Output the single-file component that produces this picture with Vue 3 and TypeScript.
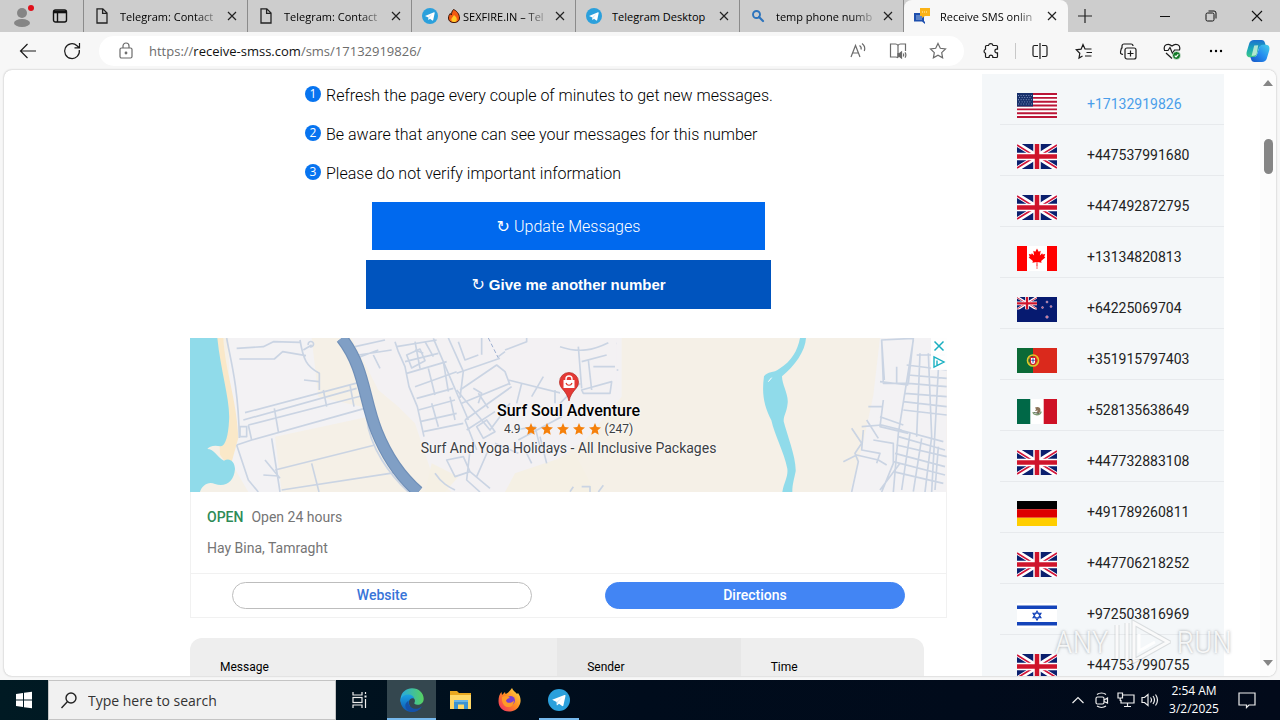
<script setup lang="ts">
interface Tab {
  id: number
  icon: string
  title: string
  fire?: boolean
  active?: boolean
}

const tabs: Tab[] = [
  { id: 1, icon: 'doc', title: 'Telegram: Contact' },
  { id: 2, icon: 'doc', title: 'Telegram: Contact' },
  { id: 3, icon: 'telegram', title: 'SEXFIRE.IN – Tel', fire: true },
  { id: 4, icon: 'telegram', title: 'Telegram Desktop' },
  { id: 5, icon: 'lens', title: 'temp phone numb' },
  { id: 6, icon: 'chat', title: 'Receive SMS onlin', active: true },
]

const tips: string[] = [
  'Refresh the page every couple of minutes to get new messages.',
  'Be aware that anyone can see your messages for this number',
  'Please do not verify important information',
]

const numbers: { flag: string; phone: string; current?: boolean }[] = [
  { flag: 'us', phone: '+17132919826', current: true },
  { flag: 'gb', phone: '+447537991680' },
  { flag: 'gb', phone: '+447492872795' },
  { flag: 'ca', phone: '+13134820813' },
  { flag: 'nz', phone: '+64225069704' },
  { flag: 'pt', phone: '+351915797403' },
  { flag: 'mx', phone: '+528135638649' },
  { flag: 'gb', phone: '+447732883108' },
  { flag: 'de', phone: '+491789260811' },
  { flag: 'gb', phone: '+447706218252' },
  { flag: 'il', phone: '+972503816969' },
  { flag: 'gb', phone: '+447537990755' },
]
</script>

<template>
  <svg class="defs" aria-hidden="true">
    <symbol id="tab-doc" viewBox="0 0 16 16">
      <path d="M3 .8h5.800l4.200 4.200V15H3zM8.600 1v4.300h4.200" fill="none" stroke="#222" stroke-width="1.300" />
    </symbol>
    <symbol id="tab-telegram" viewBox="0 0 16 16">
      <circle cx="8" cy="8" r="8" fill="#2ba0dc" />
      <path d="M3 7.900l9-3.600c.5-.1.8.1.7.7l-1.500 7c-.1.5-.5.6-.9.4L8 10.700l-1.200 1.100c-.2.2-.5.1-.5-.2V9.500z" fill="#fff" />
      <path d="M6.300 9.600l4.200-3.800-3.600 4.100-.2 1.700z" fill="#b7d9ee" />
    </symbol>
    <symbol id="tab-lens" viewBox="0 0 16 16">
      <circle cx="6.500" cy="6.500" r="3.500" fill="none" stroke="#2d74bd" stroke-width="1.900" />
      <path d="M9 9l4 4" stroke="#2d74bd" stroke-width="2.200" stroke-linecap="round" />
    </symbol>
    <symbol id="tab-chat" viewBox="0 0 16 16">
      <path d="M0 5h10v8.500h1V16l-3-2.500H0z" fill="#1d4fae" />
      <path d="M2 7h6v5H2z" fill="#5b83c8" />
      <path d="M6 0h10v8H11l-3 2V8H6z" fill="#fbb317" />
      <path d="M8 4h6" stroke="#fff0b8" stroke-dasharray="1 1" />
    </symbol>

    <symbol id="union" viewBox="0 0 40 25">
      <path d="M0 0h40v25H0z" fill="#0a1f6e" />
      <path d="M0 0l40 25M40 0L0 25" stroke="#fff" stroke-width="5" />
      <path d="M0 1l17 10.600M40 24L23 13.500M0 24l17-10.500M40 1L23 11.600" stroke="#d0163a" stroke-width="1.700" />
      <path d="M20 0v25M0 12.500h40" stroke="#fff" stroke-width="7.500" />
      <path d="M20 0v25M0 12.500h40" stroke="#cf142b" stroke-width="4.500" />
    </symbol>
    <symbol id="flag-gb" viewBox="0 0 40 25"><use href="#union" width="40" height="25" /></symbol>
    <symbol id="flag-us" viewBox="0 0 40 25">
      <path d="M0 0h40v25H0z" fill="#fff" />
      <path
        d="M0 1h40M0 4.850h40M0 8.700h40M0 12.500h40M0 16.350h40M0 20.200h40M0 24h40"
        stroke="#bb1537"
        stroke-width="1.950"
      />
      <path d="M0 0h16v13.400H0z" fill="#17306b" />
      <path
        d="M1 2.500h14M2 4.500h13M1 6.700h14M2 8.900h13M1 11h14"
        stroke="#7f93bd"
        stroke-width="1"
        stroke-dasharray="1 1.600"
      />
    </symbol>
    <symbol id="flag-ca" viewBox="0 0 40 25">
      <path d="M0 0h40v25H0z" fill="#fff" />
      <path d="M0 0h10v25H0zM30 0h10v25H30z" fill="#f00" />
      <path
        d="M20 2.500l1.700 3.300 2-1-.8 4.700 2.300-2.300.5 1.300 2.500-.4-.9 2.700 1 .6-4.200 3.700.5 1.600-4.200-.6.1 4h-1l.1-4-4.200.6.5-1.600-4.200-3.700 1-.6-.9-2.700 2.500.4.5-1.300 2.300 2.300-.8-4.700 2 1z"
        fill="#f00"
      />
      <path d="M20 20v3" stroke="#f66" />
    </symbol>
    <symbol id="flag-nz" viewBox="0 0 40 25">
      <path d="M0 0h40v25H0z" fill="#061a70" />
      <use href="#union" width="20" height="12.500" />
      <g fill="#d0557c" stroke="#c9d0ea" stroke-width=".5">
        <circle cx="30" cy="5" r="1" />
        <circle cx="25.500" cy="10.500" r="1" />
        <circle cx="34" cy="9.500" r="1" />
        <circle cx="30" cy="20" r="1.300" />
      </g>
    </symbol>
    <symbol id="flag-pt" viewBox="0 0 40 25">
      <path d="M0 0h40v25H0z" fill="#da291c" />
      <path d="M0 0h16v25H0z" fill="#0b6a37" />
      <circle cx="16" cy="12.500" r="5.500" fill="none" stroke="#e3c928" stroke-width="1.600" />
      <path d="M11 9l10 7M11 16l10-7" stroke="#e3c928" stroke-width=".7" />
      <path d="M12.800 8.800h6.400v5a3.200 3.200 0 0 1-6.400 0z" fill="#d5222a" />
      <path d="M14 10h4v4a2 2 0 0 1-4 0z" fill="#fff" />
      <path d="M16 10.300v4.500M14.300 12.300h3.400" stroke="#36509b" />
    </symbol>
    <symbol id="flag-mx" viewBox="0 0 40 25">
      <path d="M0 0h40v25H0z" fill="#fff" />
      <path d="M0 0h13.300v25H0z" fill="#006847" />
      <path d="M26.700 0H40v25H26.700z" fill="#ce1126" />
      <path d="M16 13c.5 3.500 7 4 8.200-.5" fill="none" stroke="#7d9a72" stroke-width="1.300" />
      <path d="M18 8.500c3-1.500 5.500 0 5.500 2.500 0 3-2 4-4.500 3l2-2.500-3 .5 1-1.800z" fill="#8b7258" />
      <path d="M17 13.500l5 1" stroke="#5d6b59" />
    </symbol>
    <symbol id="flag-de" viewBox="0 0 40 25">
      <path d="M0 0h40v8.300H0z" />
      <path d="M0 8.300h40v8.400H0z" fill="#d00" />
      <path d="M0 16.700h40V25H0z" fill="#ffce00" />
    </symbol>
    <symbol id="flag-il" viewBox="0 0 40 25">
      <path d="M0 0h40v25H0z" fill="#fff" />
      <path d="M0 4.200h40M0 20.800h40" stroke="#1444ba" stroke-width="3.400" />
      <path d="M20 8l4 6.800h-8zM20 17.200l4-6.900h-8z" fill="none" stroke="#1444ba" stroke-width="1.100" />
    </symbol>
  </svg>

  <div class="desktop">
    <header class="tabstrip">
      <button class="profile" aria-label="Profile">
        <svg width="26" height="26" viewBox="0 0 26 26">
          <circle cx="13" cy="10" r="5" fill="#858585" />
          <ellipse cx="13" cy="20" rx="8" ry="4" fill="#858585" />
          <circle cx="22" cy="5" r="3" fill="#e0101b" />
        </svg>
      </button>
      <button class="workspaces" aria-label="Workspaces">
        <svg width="16" height="16" viewBox="0 0 16 16" fill="none" stroke="#111" stroke-width="1.400">
          <rect x="1.500" y="2" width="13" height="12" rx="2" />
          <path d="M5.500 4v10" />
          <path d="M2 4h12" stroke-width="2.600" />
        </svg>
      </button>
      <div v-for="tab in tabs" :key="tab.id" class="tab" :class="{ active: tab.active }">
        <svg class="tab-icon" width="16" height="16"><use :href="'#tab-' + tab.icon" /></svg>
        <span class="tab-title" :class="{ faded: tab.title !== 'Telegram Desktop' }">
          <svg v-if="tab.fire" class="fire" width="12" height="14" viewBox="0 0 12 14">
            <path
              d="M5.500.5C8.500 1.500 11.500 5 11.500 9c0 3-2 4.500-5.500 4.500S.5 12 .5 9c0-2 .8-3.500 1.800-4.500l1 1.500C3.500 4 4 2 5.500.5z"
              fill="#f25a13"
              stroke="#3a1306"
            />
            <path d="M6 6c2 1.500 3 3 2.800 5-.3 1.400-1.300 2-2.800 2s-2.700-.8-2.700-2.500C3.300 9 5 8 6 6z" fill="#ffc928" />
          </svg>
          {{ tab.title }}
        </span>
        <button class="tab-close" aria-label="Close tab">
          <svg width="10" height="10" viewBox="0 0 10 10"><path d="M1 1l8 8M9 1L1 9" stroke="#222" stroke-width="1.200" /></svg>
        </button>
      </div>
      <button class="new-tab" aria-label="New tab">
        <svg width="14" height="14" viewBox="0 0 14 14"><path d="M7 0v14M0 7h14" stroke="#222" stroke-width="1.200" /></svg>
      </button>
      <div class="window-controls">
        <button aria-label="Minimize">
          <svg width="12" height="12" viewBox="0 0 12 12"><path d="M1 6.500h10" stroke="#111" /></svg>
        </button>
        <button aria-label="Restore">
          <svg width="12" height="12" viewBox="0 0 12 12" fill="none" stroke="#111">
            <rect x="1" y="3" width="8" height="8" rx="1.500" />
            <path d="M3.500 1h5.500a2 2 0 0 1 2 2v5.500" />
          </svg>
        </button>
        <button aria-label="Close">
          <svg width="12" height="12" viewBox="0 0 12 12"><path d="M1 1l10 10M11 1L1 11" stroke="#111" stroke-width="1.100" /></svg>
        </button>
      </div>
    </header>

    <nav class="toolbar">
      <button class="tool" aria-label="Back">
        <svg width="20" height="20" viewBox="0 0 20 20" class="line"><path d="M18 10H2.500M9.500 3L2.500 10l7 7" /></svg>
      </button>
      <button class="tool" aria-label="Refresh">
        <svg width="20" height="20" viewBox="0 0 20 20" class="line">
          <path d="M17.300 9A7.400 7.400 0 1 1 15 4.700L17 6.500M17.500 2v4.800h-5" />
        </svg>
      </button>
      <div class="address">
        <svg class="lock line" width="16" height="18" viewBox="0 0 16 18">
          <rect x="2" y="6" width="12" height="10" rx="1.500" />
          <path d="M5 6V4a3 3 0 0 1 6 0v2" />
          <circle cx="8" cy="11" r=".8" />
        </svg>
        <a class="url" href="https://receive-smss.com/sms/17132919826/">https://<b>receive-smss.com</b>/sms/17132919826/</a>
        <button aria-label="Read aloud">
          <svg width="18" height="18" viewBox="0 0 18 18" class="line gray">
            <path d="M2 15L6.500 3.500 11 15M3.500 11h6M10.500 3.500c1.500 1 2 2.500 1.500 4M13 1.500c2.500 1.800 3.300 4.500 2.300 7.500" />
          </svg>
        </button>
        <button aria-label="Immersive reader">
          <svg width="18" height="18" viewBox="0 0 18 18" class="line gray">
            <path d="M9 3.500v12M9 3.500C8.500 2.500 7.500 2 6.500 2H1.500v13h5c1 0 2 .3 2.500 1M9 3.500c.5-1 1.500-1.500 2.500-1.500h5v7" />
            <path d="M9 11.500h1.500L12.500 10v6l-2-1.500H9z" fill="#666" />
            <path d="M14.200 11.500q1 1.500 0 3M16 10.300q1.800 2.700 0 5.400" />
          </svg>
        </button>
        <button aria-label="Add to favorites">
          <svg width="18" height="18" viewBox="0 0 18 18" class="line gray">
            <path d="M9 1.500l2.300 4.800 5.200.7-3.800 3.600.9 5.200L9 13.300l-4.600 2.500.9-5.200L1.500 7l5.200-.7z" />
          </svg>
        </button>
      </div>
      <button class="tool" aria-label="Extensions">
        <svg width="18" height="18" viewBox="0 0 18 18" class="line">
          <path
            d="M6.500 3.500a2.300 2.300 0 0 1 4.500 0h3.500a1 1 0 0 1 1 1v2.700h-1.200a1.900 1.900 0 0 0 0 3.700h1.200v3.600a1 1 0 0 1-1 1h-3.700v-1a1.900 1.900 0 0 0-3.700 0v1H4.500a1 1 0 0 1-1-1v-3.300a2.100 2.100 0 0 1 0-4V4.500a1 1 0 0 1 1-1z"
          />
        </svg>
      </button>
      <span class="divider"></span>
      <button class="tool" aria-label="Split screen">
        <svg width="18" height="18" viewBox="0 0 18 18" class="line">
          <path d="M9 1v16M7 3.500H3.500a1.500 1.500 0 0 0-1.500 1.500v8a1.500 1.500 0 0 0 1.500 1.500H7M11 3.500h3.500A1.500 1.500 0 0 1 16 5v8a1.500 1.500 0 0 1-1.500 1.500H11" />
        </svg>
      </button>
      <button class="tool" aria-label="Favorites">
        <svg width="18" height="18" viewBox="0 0 18 18" class="line">
          <path d="M7.500 14l-3.500 2 .8-4.700L1.300 7.800l4.800-.6L8 2.500l2 4.500h6.500M11.500 10.500H17M10 14h6.500" />
        </svg>
      </button>
      <button class="tool" aria-label="Collections">
        <svg width="18" height="18" viewBox="0 0 18 18" class="line">
          <rect x="6" y="6" width="11" height="11" rx="2" />
          <path d="M11.500 8.500v6M8.500 11.500h6M4 12.500l-1.200-.3a2 2 0 0 1-1.300-2.400l1-4M3 6.500V4a2 2 0 0 1 2-2h7a2 2 0 0 1 2 2" />
        </svg>
      </button>
      <button class="tool" aria-label="Browser essentials">
        <svg width="18" height="18" viewBox="0 0 18 18" class="line">
          <path d="M1.500 8C0 3 5 .5 9 4c4-3.500 9-1 7.500 4M3 11l6 5.500M1 8.500h4l2-3 2.500 6 2-3.500H17" />
          <circle cx="13.500" cy="13.500" r="4" fill="#137a28" stroke="#f7f7f7" stroke-width=".7" />
          <path d="M11.700 13.600l1.300 1.300 2.300-2.600" stroke="#fff" />
        </svg>
      </button>
      <button class="tool more" aria-label="Settings and more">
        <svg width="16" height="16" viewBox="0 0 16 16"><circle cx="3" cy="8" r="1.200" /><circle cx="8" cy="8" r="1.200" /><circle cx="13" cy="8" r="1.200" /></svg>
      </button>
      <button class="copilot" aria-label="Copilot">
        <svg width="24" height="24" viewBox="0 0 24 24">
          <defs>
            <linearGradient id="cpa" x1="0" y1="0" x2="0" y2="1">
              <stop offset="0" stop-color="#1c6fd0" /><stop offset=".5" stop-color="#19a7b8" /><stop offset="1" stop-color="#3fc985" />
            </linearGradient>
            <linearGradient id="cpb" x1="1" y1="0" x2="0" y2="1">
              <stop offset="0" stop-color="#45d0e8" /><stop offset=".5" stop-color="#258cf0" /><stop offset="1" stop-color="#1453c4" />
            </linearGradient>
          </defs>
          <path d="M8 1h7.500c2 0 3 1.200 3.500 3l.7 2.500h-3.200c-2 0-3 1-3.600 3L11 15c-.6 2-1.600 3.300-3.800 3.300H4C.8 18.300 0 15.500.8 12.500l2.400-8C3.900 2.200 5.500 1 8 1z" fill="url(#cpa)" />
          <path d="M16 23H8.500c-2 0-3-1.200-3.500-3l-.6-2h3c2 0 3.200-1 3.800-3L13 9c.6-2 1.600-3.300 3.800-3.300H20c3.200 0 4 2.800 3.200 5.800l-2.400 8C20.100 21.800 18.500 23 16 23z" fill="url(#cpb)" />
          <path d="M12.200 6.200l-4 .3L5.600 17l3.300-.4c1-.4 1.500-1.200 1.900-2.400z" fill="#c9efd6" opacity=".85" />
        </svg>
      </button>
    </nav>

    <div class="viewport">
      <div class="page">
        <main class="content">
          <ol class="tips">
            <li v-for="(tip, i) in tips" :key="tip"><span class="tip-no">{{ i + 1 }}</span>{{ tip }}</li>
          </ol>
          <div class="actions">
            <button class="update"><span class="spin">↻</span> Update Messages</button>
            <button class="another"><span class="spin">↻</span> Give me another number</button>
          </div>

          <section class="ad">
            <div class="map">
              <svg class="map-art" viewBox="0 0 757 154" preserveAspectRatio="xMidYMid slice">
                <path d="M0 0h757v154H0z" fill="#f5f0e7" />
                <g transform="translate(-5 -8) scale(.33333)">
                  <path d="M130 24H380L400 200 550 235 550 260 270 320 290 486 190 486 140 400z" fill="#f3f2f4" />
                  <path d="M500 24H1310V200L1200 330 1100 400 960 486H800L740 430 690 280 640 230 580 180z" fill="#f3f1f3" />
                  <path d="M740 400l80 40-40 46h-60zM990 430l180-60 60 116H960z" fill="#f5f0e4" />
                  <path d="M90 24h25c5 100 40 180 45 300l-25 90-30-40z" fill="#fae8c8" />
                  <path d="M15 24h82c10 100 40 190 35 250-2 40-10 75-25 75-20-5-35 0-40 8 20 0 30 25 50 35 15-10 32 0 33 25-3 40-30 55-60 45-20-10-40 5-45 24H15z" fill="#90dbea" />
                  <g class="roads">
                    <path d="M125 24c10 60 35 140 38 300M155 55l80-5 30-15 80 2M163 87h105l25-22 70 12M345 30c10 60 20 80 58 100v50M355 60l25-15M357 150l45 5M370 45a8 8 0 1 1 5 5" />
                    <path d="M180 248l340-90M190 285l350-90M175 270l340-95M190 285l10 45 350-98M155 345l45-15M268 235l12 70M415 180l10 50M495 165l12 65M165 290h20v30h-20z" />
                    <path d="M155 345l35 105 30 36M260 325l25 161M270 420l300-75M380 400l22 86M290 480l340-52M240 390l45 55M235 435l45 3" />
                    <path d="M545 265c10 90 70 170 125 221M500 90l80-30M510 50l90-20M520 75l100-15M565 75l20 40M630 35l10 30 20 45 12 60 25 60 20 90" />
                    <path d="M635 50l120-20M660 95l100-25M665 130l120-35M690 170l125-45M695 205l110-30M700 240l110-30M705 275l110-25M715 305l120-25M690 35l15 80M745 25l105 245M790 24l45 100-10 80M665 75l40-18 15 35-40 22z" />
                    <path d="M815 130l130-45M825 180l110-75 25 20 15 40M830 220l145-60M840 270l140-100M840 270l35 90M845 300l85-55M815 180l100 120 60-80M880 190l30 45M960 60l65-25v-11M940 80l20-15M820 35l20 55 40-15M890 24v50M970 150l200 50M1010 160l-15 60M1075 140l-35 60" />
                    <path d="M855 360l-10 90 40 36M785 390l50-10 20 45-45 15zM855 425l60 50M910 360l-35 80M930 340l70 30M990 300l60-10 20 80M1000 330l130-70M1010 340l30 60M1065 320l20 80M1110 180v40M1145 65l150-25M1185 60l10 125M1220 75l15 110M1190 120h110M1180 180l110-10M750 430c20 30 40 40 60 50" />
                    <path d="M875 290l30-20 25 35-35 20zM690 60l25 10M720 35l25 45M730 115l20 80M775 95l15 90M795 200l15 70M740 220l20 70M865 175l25 15-10 30" />
                  </g>
                  <path d="M910 24l30 60" stroke="#9cafd0" stroke-width="3" stroke-dasharray="12 7" />
                  <path d="M470 24c70 90 65 180 105 280 28 70 65 130 125 182" stroke="#6f8fb8" stroke-width="37" fill="none" />
                  <path d="M470 24c70 90 65 180 105 280 28 70 65 130 125 182" stroke="#809fc5" stroke-width="30" fill="none" />
                </g>
                <g transform="translate(370 -8) scale(.33333)">
                  <path d="M960 24h200v462H870l40-150 30-140z" fill="#f3f2f4" />
                  <path d="M0 24h170v170L100 210 0 240z" fill="#f3f1f3" />
                  <path d="M720 24h18c-2 40-35 85-72 115 0 25 20 55 17 80-3 30-12 35-12 55 10 40 38 110 36 150-5 25-10 40-10 62h-30c5-30 18-45 15-70-10-50-38-100-48-145-20-40-30-75-22-132 10-15 30-10 45-22 40-25 55-55 63-93z" fill="#90dbea" />
                  <path d="M625 155l10-12" stroke="#fff" stroke-width="3" />
                  <g class="roads">
                    <path d="M0 50c60 20 100 10 145-12M55 50l10 125M85 90l10 90M65 95l75-20M100 110h65M65 180l90-25-5 35H70zM0 220l60-60M30 485l10-15M65 470h25v16M115 486l15-20" />
                    <path d="M965 30l95-5-15 135h-75zM965 30l8 120M1060 30l-45 280-15 176M1070 75h85M1080 70l-10 250M1105 70l10 250-20 166M1135 120l-20 366M1040 105l120 15M1045 135l115 10M1045 160l115 10M1035 190l125 10M1030 215l130 15M1030 240l130 15M960 155l85 10M1010 110v50" />
                    <path d="M970 210l-10 80 85 20M925 230h40M905 290l60-5 60 15M960 260l70 25M1020 300l130 35M1015 320l140 40M1010 345l150 35M1005 370l150 40M1000 395l155 40M1000 425l150 35M1050 310l-25 170M1085 325l-25 160M1135 350l-10 130" />
                    <path d="M875 295l30 45-20 30 10 25-20 91M850 395l40-20 65 15 25 15M910 300l-5 60 55 10-10 30M940 330l60 10v60l-35 86M960 480l60-80M920 270l35 55" />
                  </g>
                </g>
              </svg>
              <div class="ad-buttons">
                <button aria-label="Close ad">
                  <svg width="14" height="14" viewBox="0 0 14 14"><path d="M2.500 2.500l9 9M11.500 2.500l-9 9" stroke="#19aec0" stroke-width="1.500" /></svg>
                </button>
                <button aria-label="Ad choices">
                  <svg width="14" height="14" viewBox="0 0 14 14" fill="none" stroke="#19b0c2" stroke-width="1.400"><path d="M2 1.800l10 5.200-10 5.200zM5 5.500v4.500" /></svg>
                </button>
              </div>
              <div class="place">
                <svg width="20" height="30" viewBox="0 0 20 30">
                  <path d="M10 .5a9.500 9.500 0 0 1 9.500 9.500c0 7-7 8-9.500 19C7.500 18 .5 17 .5 10A9.500 9.500 0 0 1 10 .5z" fill="#e53935" stroke="#b3261e" stroke-width=".7" />
                  <path d="M4.500 8h11v8h-11z" fill="#fff" />
                  <path d="M7 8V7a3 3 0 0 1 6 0v1" fill="none" stroke="#fff" stroke-width="1.400" />
                  <path d="M7 11c1 3 5 3 6 0" fill="none" stroke="#d93025" stroke-width="1.200" />
                </svg>
                <strong>Surf Soul Adventure</strong>
                <div class="rating">
                  <span>4.9</span>
                  <span class="stars">
                    <svg v-for="n in 5" :key="n" width="12" height="12" viewBox="0 0 12 12">
                      <path d="M6 0l1.700 4.100 4.300.3-3.300 2.900 1 4.400L6 9.400l-3.700 2.300 1-4.400L0 4.400l4.300-.3z" fill="#f5800b" />
                    </svg>
                  </span>
                  <span>(247)</span>
                </div>
                <p>Surf And Yoga Holidays - All Inclusive Packages</p>
              </div>
            </div>
            <div class="ad-info">
              <p><b>OPEN</b>Open 24 hours</p>
              <p>Hay Bina, Tamraght</p>
            </div>
            <div class="ad-actions">
              <a class="outline" href="#website">Website</a>
              <a class="solid" href="#directions">Directions</a>
            </div>
          </section>

          <table class="messages">
            <thead>
              <tr><th>Message</th><th class="sorted">Sender</th><th>Time</th></tr>
            </thead>
          </table>
        </main>

        <aside class="numbers">
          <a v-for="n in numbers" :key="n.phone" :href="'#' + n.phone" :class="{ current: n.current }">
            <svg width="40" height="25"><use :href="'#flag-' + n.flag" /></svg>
            <span>{{ n.phone }}</span>
          </a>
        </aside>
      </div>
      <div class="scrollbar">
        <svg width="10" height="6" viewBox="0 0 10 6"><path d="M0 6l5-6 5 6z" fill="#858585" /></svg>
        <span class="thumb"></span>
        <svg class="down" width="10" height="6" viewBox="0 0 10 6"><path d="M0 0l5 6 5-6z" fill="#858585" /></svg>
      </div>
    </div>

    <div class="watermark">
      <span>ANY</span>
      <svg width="58" height="46" viewBox="0 0 58 46">
        <g fill="none" stroke="#8b8f94" stroke-opacity=".25" stroke-width="5">
          <path d="M4 6v34M14 4v38M21 4l34 19-34 19z" />
        </g>
        <g fill="none" stroke="#fff" stroke-opacity=".85" stroke-width="3">
          <path d="M4 6v34M14 4v38M21 4l34 19-34 19zM26 15v17l16-9" />
        </g>
      </svg>
      <span>RUN</span>
    </div>

    <footer class="taskbar">
      <button class="start" aria-label="Start">
        <svg width="18" height="18" viewBox="0 0 18 18" fill="#fff"><path d="M1 3l7-1v6.500H1zM9 1.800L17 .7v7.800H9zM1 9.500h7V16l-7-1zM9 9.500h8v7.800l-8-1.100z" /></svg>
      </button>
      <label class="search">
        <svg width="18" height="18" viewBox="0 0 18 18" fill="none" stroke="#222" stroke-width="1.400"><circle cx="11" cy="7" r="5" /><path d="M7.300 10.800L1.500 17" /></svg>
        <input type="text" placeholder="Type here to search" aria-label="Type here to search" />
      </label>
      <button class="app task-view" aria-label="Task view">
        <svg width="18" height="18" viewBox="0 0 18 18" fill="none" stroke="#eee" stroke-width="1.200">
          <path d="M2 1v3h9V1M2 17v-3h9v3" /><rect x="2" y="6.500" width="9" height="5" /><path d="M14.500 1v2M14.500 8v9" /><path d="M13.500 5.500h2" stroke-width="2" />
        </svg>
      </button>
      <button class="app focused" aria-label="Edge">
        <svg width="24" height="24" viewBox="0 0 24 24">
          <defs>
            <linearGradient id="ea" x1="0" y1="0" x2="1" y2="0"><stop offset="0" stop-color="#28a9e0" /><stop offset="1" stop-color="#57d260" /></linearGradient>
            <linearGradient id="eb" x1="0" y1="0" x2="0" y2="1"><stop offset="0" stop-color="#1ba2e2" /><stop offset="1" stop-color="#0e55b2" /></linearGradient>
          </defs>
          <path d="M.5 10.500C1.500 4 6.500.3 12 .3c7 0 11.700 5 11.700 10.400 0 4-3 6-6.200 6-2.500 0-3.500-1-3.200-1.600 2-3-.5-6.600-5-6.600-4 0-7 2-8.800 5.500z" fill="url(#ea)" />
          <path d="M.5 11.500C2 7.500 6 6 9 6.500c3 .3 5 2.500 5.200 4-3.400-1-5.700 1.500-5.200 5 .7 4 4 6.500 8.500 6.500C15.500 23.500 13.500 24 12 24 5 24 0 18 .5 11.500z" fill="url(#eb)" />
          <path d="M8.700 12.500C7.500 18 12 21.500 17 20.700c2.500-.4 4-1.700 5-2.700-2 5-8 7-13 5-4.500-2-5.200-7.500-.3-10.500z" fill="#1551a8" />
        </svg>
      </button>
      <button class="app" aria-label="File Explorer">
        <svg width="24" height="24" viewBox="0 0 24 24">
          <path d="M1 3h7l2 2h12v16H1z" fill="#e9a820" /><path d="M1 7h21v14H1z" fill="#ffd867" />
          <path d="M5 12h14v9h-4v-4.500H9V21H5z" fill="#3c93d2" /><path d="M5 12h14v2H5z" fill="#69b5e7" />
        </svg>
      </button>
      <button class="app" aria-label="Firefox">
        <svg width="24" height="24" viewBox="0 0 24 24">
          <defs><linearGradient id="fx" x1="1" y1="0" x2="0" y2="1"><stop offset="0" stop-color="#ffe34a" /><stop offset=".5" stop-color="#ff8a22" /><stop offset="1" stop-color="#f0246c" /></linearGradient></defs>
          <path d="M14 0c1 3 4 4 5 6l1-1c3 4 3.500 9 1 13-2 4-6 5.500-10 5.500C4.500 23.500.5 19 .5 13c0-4 1-7 3-9l.5 3 3-3 .5 2C10 5 12 3 14 0z" fill="url(#fx)" />
          <circle cx="12.500" cy="12.500" r="4.500" fill="#7b3fd0" />
          <path d="M4 9c3-1.500 6-1.500 8 1-2 0-4 1.500-4 3 1.500 3 6 2 8-.5-.5 5-3 7-6.500 6.500C5 18.500 3.500 13 4 9z" fill="#ff9a28" />
        </svg>
      </button>
      <button class="app running" aria-label="Telegram">
        <svg width="22" height="22"><use href="#tab-telegram" /></svg>
      </button>
      <div class="tray">
        <button aria-label="Show hidden icons"><svg width="12" height="12" viewBox="0 0 12 12" class="traylines"><path d="M.5 9L6 3.500 11.500 9" /></svg></button>
        <button aria-label="Meet now"><svg width="14" height="16" viewBox="0 0 14 16" class="traylines"><rect x="1" y="5" width="8" height="7" rx="1.500" /><path d="M9 8l3.500-2v5L9 9.500M2 2.500c2.500-2 6.500-2 9 0M2 14c2.500 1.700 6.500 1.700 9 0" /></svg></button>
        <button aria-label="Network"><svg width="18" height="16" viewBox="0 0 18 16" class="traylines"><path d="M6 3h11v8H4V8M10.500 11v3.500M7 14.500h7M1 1h4.500v5H1zM3.200 6v3" /></svg></button>
        <button aria-label="Volume"><svg width="18" height="16" viewBox="0 0 18 16" class="traylines"><path d="M1 5.500h2.500L7 2.500v11l-3.500-3H1zM9.500 5.500q2 2.500 0 5M12 4q3 4 0 8M14.500 2.500q4 5.500 0 11" /></svg></button>
        <time>2:54 AM<br />3/2/2025</time>
        <button class="notify" aria-label="Notifications"><svg width="18" height="18" viewBox="0 0 18 18" class="traylines"><path d="M1 2h16v12h-6l-2.500 2.500V14H1z" /></svg></button>
      </div>
    </footer>
  </div>
</template>

<style>
body {
  margin: 0;
  overflow: hidden;
}
</style>

<style scoped>
* {
  box-sizing: border-box;
}
button {
  border: 0;
  padding: 0;
  background: none;
  font: inherit;
  color: inherit;
  display: flex;
  align-items: center;
  justify-content: center;
}
p,
ol {
  margin: 0;
  padding: 0;
}
a {
  color: inherit;
  text-decoration: none;
}
svg {
  flex: none;
}
.defs {
  position: absolute;
  width: 0;
  height: 0;
}
.line {
  fill: none;
  stroke: #1b1b1b;
  stroke-width: 1.2;
}
.gray,
.lock {
  stroke: #6b6b6b;
}
.desktop {
  position: relative;
  display: flex;
  flex-direction: column;
  height: 100vh;
  background: #f7f7f7;
  font-family: "Open Sans", "Noto Sans", sans-serif;
}

/* Tab strip */
.tabstrip {
  display: flex;
  flex: none;
  height: 32px;
  background: #cdcdcd;
  font-size: 11px;
}
.profile {
  width: 44px;
}
.workspaces {
  width: 40px;
  padding-right: 8px;
  border-right: 1px solid #8b8b8b;
}
.tab {
  display: flex;
  align-items: center;
  flex: 0 1 164px;
  min-width: 0;
  padding: 0 7px 0 10px;
  border-right: 1px solid #8b8b8b;
}
.tab-title {
  display: flex;
  align-items: center;
  gap: 3px;
  flex: 1;
  min-width: 0;
  margin: 0 4px 0 10px;
  overflow: hidden;
  color: #000;
  white-space: nowrap;
}
.faded {
  mask-image: linear-gradient(90deg, #000 75%, rgba(0, 0, 0, 0.1));
}
.tab-close {
  width: 16px;
  height: 16px;
}
.tab.active {
  background: #f7f7f7;
  border-color: transparent;
  border-radius: 8px 8px 0 0;
}
.new-tab {
  width: 34px;
}
.window-controls {
  display: flex;
  margin-left: auto;
}
.window-controls button {
  width: 46px;
}

/* Toolbar */
.toolbar {
  display: flex;
  align-items: center;
  flex: none;
  height: 38px;
  padding: 0 2px 0 6px;
}
.tool {
  width: 44px;
  height: 32px;
}
.address {
  display: flex;
  align-items: center;
  flex: 1;
  height: 30px;
  margin: 0 5px;
  padding: 0 6px 0 19px;
  border-radius: 15px;
  background: #fff;
  font-size: 13px;
}
.address button {
  width: 40px;
  height: 30px;
}
.url {
  flex: 1;
  margin-left: 15px;
  color: #6c6c6c;
}
.url b {
  font-weight: 400;
  color: #111;
}
.divider {
  width: 1px;
  height: 16px;
  margin: 0 2px;
  background: #c8c8c8;
}
.copilot {
  width: 40px;
  height: 32px;
}

/* Page */
.viewport {
  display: flex;
  flex: 1;
  min-height: 0;
  margin: 0 4px 4px;
  overflow: hidden;
  border-radius: 8px;
  background: #fff;
  box-shadow: 0 0 2px #aaa;
  font-family: Roboto, sans-serif;
}
.page {
  display: grid;
  grid-template-columns: minmax(0, 1fr) 242px;
  gap: 35px;
  flex: 1;
  min-width: 0;
  padding: 4px 36px 0 186px;
}
.tips {
  display: flex;
  flex-direction: column;
  gap: 15px;
  padding: 10px 0 0 115px;
  list-style: none;
  font-size: 16px;
  font-weight: 300;
  line-height: 24px;
  color: #000;
}
.tips li {
  display: flex;
  align-items: center;
  gap: 5px;
}
.tip-no {
  width: 16px;
  height: 16px;
  margin-bottom: 4px;
  border-radius: 50%;
  background: #0774f0;
  color: #fff;
  font: 12px/16px "Open Sans", sans-serif;
  text-align: center;
}
.actions {
  display: flex;
  flex-direction: column;
  align-items: center;
  gap: 10px;
  margin-top: 16px;
  color: #fff;
  font-size: 16px;
}
.actions button {
  gap: 4px;
}
.spin {
  font-family: "DejaVu Sans", sans-serif;
  font-weight: 400;
  font-size: 16px;
}
.update {
  width: 52%;
  height: 48px;
  background: #0069ee;
  font-weight: 300;
}
.another {
  width: 405px;
  height: 49px;
  background: #0054be;
  font-family: "Liberation Sans", sans-serif;
  font-size: 15px;
  font-weight: 700;
}
.ad {
  margin-top: 29px;
  border: 1px solid #f1f1f1;
  border-top: 0;
}
.map {
  position: relative;
  height: 154px;
  margin: 0 -1px;
}
.map-art {
  display: block;
  width: 100%;
  height: 100%;
}
.roads {
  fill: none;
  stroke: #cad4e3;
  stroke-width: 5;
  stroke-linejoin: round;
}
.ad-buttons {
  position: absolute;
  top: 0;
  right: 0;
  background: rgba(255, 255, 255, 0.9);
}
.ad-buttons button {
  width: 16px;
  height: 16px;
}
.place {
  position: absolute;
  inset: 34px 0 0;
  display: flex;
  flex-direction: column;
  align-items: center;
  color: #3c4043;
  font-size: 14px;
  line-height: 20px;
  text-shadow: 0 0 2px #fff, 0 0 3px #fff;
}
.place strong {
  color: #000;
  font-size: 16px;
  font-weight: 500;
  line-height: 18px;
}
.rating {
  display: flex;
  align-items: center;
  gap: 4px;
  font-size: 12px;
  line-height: 18px;
}
.stars {
  display: flex;
  gap: 4px;
}
.ad-info {
  display: flex;
  flex-direction: column;
  gap: 11px;
  padding: 15px 16px;
  color: #757575;
  font-size: 14px;
  line-height: 20px;
}
.ad-info b {
  margin-right: 8px;
  color: #2e8b57;
  font-weight: 500;
}
.ad-actions {
  display: flex;
  justify-content: space-between;
  padding: 8px 41px;
  border-top: 1px solid #f1f1f1;
  font-size: 14px;
  font-weight: 500;
}
.ad-actions a {
  width: 300px;
  border: 1px solid #bdbdbd;
  border-radius: 14px;
  line-height: 25px;
  text-align: center;
}
.outline {
  color: #3874d8;
}
.ad-actions .solid {
  border-color: #4285f4;
  background: #4285f4;
  color: #fff;
}
.messages {
  width: 97%;
  height: 58px;
  margin-top: 20px;
  overflow: hidden;
  border-collapse: collapse;
  border-radius: 12px 12px 0 0;
  background: #eee;
  table-layout: fixed;
  font-size: 12px;
  color: #000;
}
.messages th {
  padding: 0 30px;
  font-weight: 400;
  text-align: left;
}
.messages th:first-child {
  width: 50%;
}
.messages .sorted {
  background: #e7e7e7;
}
.numbers {
  padding-left: 18px;
  background: #f4f7f9;
}
.numbers a {
  display: flex;
  align-items: center;
  gap: 30px;
  height: 51px;
  padding: 12px 17px 0;
  border-bottom: 1px solid #e7eaed;
  color: #222;
  font-size: 14px;
}
.numbers span {
  padding-bottom: 2px;
}
.numbers .current {
  color: #4a9eea;
}
.scrollbar {
  display: flex;
  flex-direction: column;
  align-items: center;
  width: 16px;
  padding: 10px 0;
  background: #fcfcfc;
}
.thumb {
  width: 9px;
  height: 35px;
  margin-top: 53px;
  border-radius: 5px;
  background: #858585;
}
.down {
  margin-top: auto;
}

/* Recorder logo laid over the screen corner */
.watermark {
  position: absolute;
  right: 48px;
  bottom: 55px;
  display: flex;
  align-items: center;
  gap: 5px;
  color: rgba(255, 255, 255, 0.85);
  font: 300 32px/46px "Roboto Condensed", "Open Sans Condensed", Roboto, sans-serif;
  text-shadow: 0 0 3px rgba(100, 105, 110, 0.6);
  pointer-events: none;
}

/* Taskbar */
.taskbar {
  display: flex;
  flex: none;
  height: 40px;
  background: linear-gradient(90deg, #001a23, #000c1c 50%, #020a1a);
  color: #fff;
}
.start {
  width: 48px;
}
.search {
  display: flex;
  align-items: center;
  gap: 10px;
  width: 288px;
  padding: 0 11px;
  border: 1px solid #c4c4c4;
  background: #f1f1f1;
}
.search input {
  flex: 1;
  min-width: 0;
  border: 0;
  padding: 0;
  outline: 0;
  background: none;
  font: 14px "Open Sans", sans-serif;
}
.search input::placeholder {
  color: #333;
  opacity: 1;
}
.app {
  width: 49px;
}
.task-view {
  width: 51px;
  padding-right: 3px;
}
.focused {
  background: #34474f;
}
.focused,
.running {
  box-shadow: inset 0 -2px #76b9ed;
}
.running {
  width: 40px;
  margin: 0 5px;
}
.tray {
  display: flex;
  align-items: center;
  margin-left: auto;
  padding-right: 4px;
}
.tray button {
  width: 24px;
  height: 40px;
}
.traylines {
  fill: none;
  stroke: #eee;
  stroke-width: 1.2;
}
.tray time {
  width: 64px;
  font-size: 12px;
  line-height: 18px;
  text-align: center;
}
.tray .notify {
  width: 42px;
  margin-right: 8px;
}
</style>
